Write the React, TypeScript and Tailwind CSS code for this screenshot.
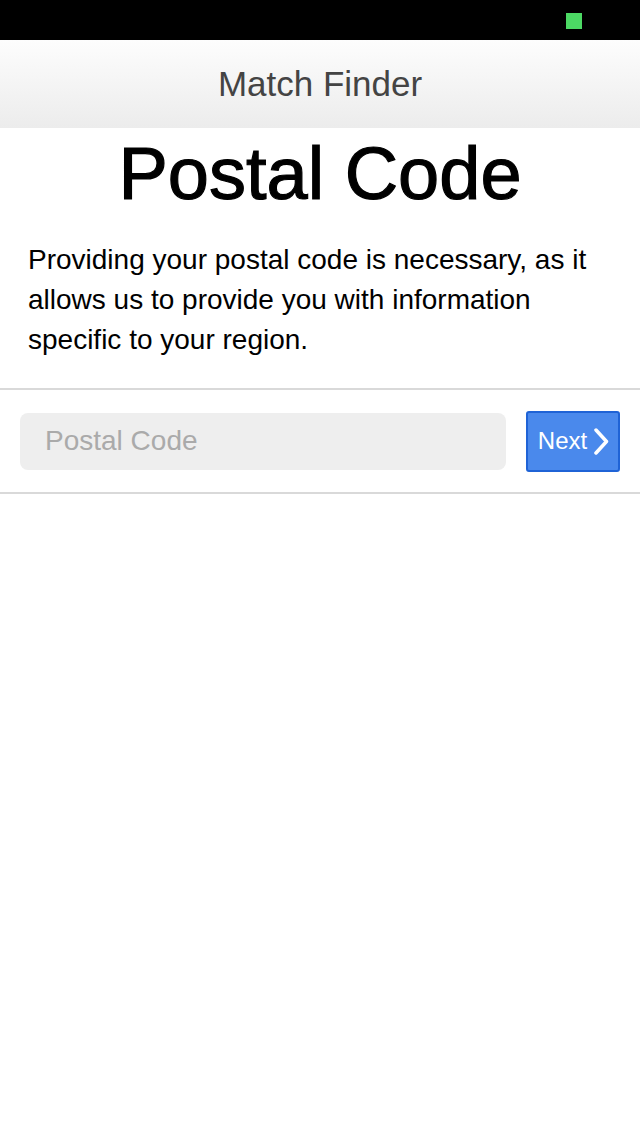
export default function App() {
  return (
    <div className="w-[640px] h-[1136px] bg-white flex flex-col" style={{ fontFamily: '"Liberation Sans", Arial, sans-serif' }}>
      {/* Status bar */}
      <div className="h-[40px] bg-black flex items-start justify-end pr-[58px] pt-[13px] shrink-0">
        <div className="w-[16px] h-[16px] bg-[#4cd964]" />
      </div>

      {/* Nav bar */}
      <div className="h-[88px] shrink-0 bg-gradient-to-b from-[#fdfdfd] to-[#ececec] flex items-center justify-center">
        <h1 className="text-[35px] leading-none text-[#444444] pb-[1px]">Match Finder</h1>
      </div>

      {/* Heading */}
      <h2 className="mt-[9px] text-center text-[74px] leading-[74px] text-black [-webkit-text-stroke:1.2px_black]">Postal Code</h2>

      <p className="mt-[29px] px-[28px] text-[28px] leading-[40px] text-black">
        Providing your postal code is necessary, as it allows us to provide you with information specific to your region.
      </p>

      {/* Input row */}
      <div className="mt-[28px] border-y-2 border-[#d9d9d9] h-[106px] flex items-center gap-[20px] pl-[20px] pr-[20px]">
        <div className="flex-1 h-[57px] rounded-[8px] bg-[#eeeeee] flex items-center pl-[25px]">
          <span className="text-[28px] text-[#aaaaaa]">Postal Code</span>
        </div>
        <button className="w-[94px] h-[61px] rounded-[3px] bg-[#4a89ec] border-2 border-[#1f63d6] flex items-center justify-center gap-[6px] pl-[2px]">
          <span className="text-[24px] text-white">Next</span>
          <svg width="17" height="27" viewBox="0 0 17 27" fill="none">
            <path d="M3 2 L13.5 13.5 L3 25" stroke="white" strokeWidth="3.5" strokeLinecap="round" strokeLinejoin="round" />
          </svg>
        </button>
      </div>
    </div>
  );
}
